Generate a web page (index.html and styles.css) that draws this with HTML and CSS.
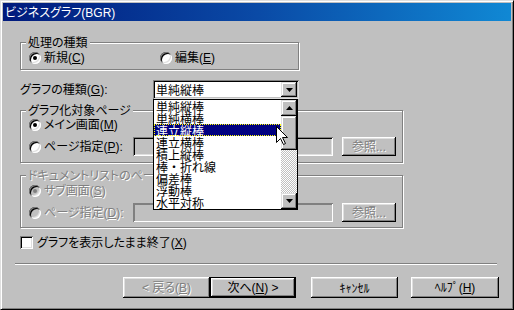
FILE: index.html
```html
<!DOCTYPE html>
<html lang="ja">
<head>
<meta charset="utf-8">
<title>ビジネスグラフ(BGR)</title>
<link rel="stylesheet" href="styles.css">
</head>
<body>
<div class="window">
  <div class="titlebar">ビジネスグラフ<span class="lat">(BGR)</span></div>
  <div class="content">
    <div class="group g1">
      <span class="legend">処理の種類</span>
      <div class="row r13">
        <label class="opt w131"><span class="radio checked"></span><span>新規<span class="lat">(<u>C</u>)</span></span></label>
        <label class="opt"><span class="radio"></span><span>編集<span class="lat">(<u>E</u>)</span></span></label>
      </div>
    </div>

    <div class="combo-row">
      <span class="combo-label">グラフの種類<span class="lat">(<u>G</u>):</span></span>
      <div class="combo">
        <span class="combo-text">単純縦棒</span>
        <span class="combo-btn raised">
          <svg width="7" height="4" viewBox="0 0 7 4"><polygon points="0,0 7,0 3.5,4" fill="#000"/></svg>
        </span>
        <div class="dropdown">
          <ul class="items">
            <li>単純縦棒</li>
            <li>単純横棒</li>
            <li class="sel">連立縦棒</li>
            <li>連立横棒</li>
            <li>積上縦棒</li>
            <li>棒・折れ線</li>
            <li>偏差棒</li>
            <li>浮動棒</li>
            <li>水平対称</li>
          </ul>
          <div class="scrollbar">
            <div class="sb-btn raised">
              <svg width="7" height="4" viewBox="0 0 7 4"><polygon points="3.5,0 7,4 0,4" fill="#000"/></svg>
            </div>
            <div class="sb-thumb raised"></div>
            <div class="sb-track"></div>
            <div class="sb-btn raised">
              <svg width="7" height="4" viewBox="0 0 7 4"><polygon points="0,0 7,0 3.5,4" fill="#000"/></svg>
            </div>
          </div>
          <svg class="cursor" width="13" height="20" viewBox="0 0 13 20">
            <path d="M0.5 0.5 L0.5 16.5 L4.5 12.5 L7.5 18.5 L9.5 17.5 L6.5 11.5 L11.5 11.5 Z" fill="#fff" stroke="#000" stroke-width="1"/>
          </svg>
        </div>
      </div>
    </div>

    <div class="group g2">
      <span class="legend">グラフ化対象ページ</span>
      <div class="row r13">
        <label class="opt"><span class="radio checked"></span><span>メイン画面<span class="lat">(<u>M</u>)</span></span></label>
      </div>
      <div class="row r19 mt6">
        <label class="opt w104"><span class="radio"></span><span>ページ指定<span class="lat">(<u>P</u>):</span></span></label>
        <span class="field"></span>
        <span class="btn small disabled"><span>参照<span class="lat">...</span></span></span>
      </div>
    </div>

    <div class="group g3 dis">
      <span class="legend">ドキュメントリストのページ</span>
      <div class="row r13">
        <label class="opt"><span class="radio checked"></span><span>サブ画面<span class="lat">(<u>S</u>)</span></span></label>
      </div>
      <div class="row r19 mt6">
        <label class="opt w104"><span class="radio"></span><span>ページ指定<span class="lat">(<u>D</u>):</span></span></label>
        <span class="field"></span>
        <span class="btn small disabled"><span>参照<span class="lat">...</span></span></span>
      </div>
    </div>

    <div class="row r13 check-row">
      <label class="opt gap4"><span class="checkbox"></span><span>グラフを表示したまま終了<span class="lat">(<u>X</u>)</span></span></label>
    </div>

    <div class="sep"></div>

    <div class="buttons">
      <span class="btn b-back disabled"><span><span class="lat">&lt; </span>戻る<span class="lat">(<u>B</u>)</span></span></span>
      <span class="btn b-next default"><span>次へ<span class="lat">(<u>N</u>) &gt;</span></span></span>
      <span class="btn b-cancel"><span>ｷｬﾝｾﾙ</span></span>
      <span class="btn b-help"><span>ﾍﾙﾌﾟ<span class="lat">(<u>H</u>)</span></span></span>
    </div>
  </div>
</div>
</body>
</html>
```

FILE: styles.css
```css
* { box-sizing: border-box; }

html, body {
  margin: 0;
  padding: 0;
  background: #c0c0c0;
}

body {
  font-family: "Noto Sans CJK JP", sans-serif;
  font-size: 12px;
  line-height: 12px;
  color: #000;
  font-feature-settings: "palt" 1;
  text-autospace: no-autospace;
}

.lat {
  font-family: "Liberation Sans", sans-serif;
  font-feature-settings: normal;
}

.window {
  position: relative;
  width: 514px;
  height: 310px;
  background: #c0c0c0;
  border: 1px solid;
  border-color: #dfdfdf #000 #000 #dfdfdf;
  box-shadow: inset 1px 1px #fff, inset -1px -1px #808080;
  padding: 2px;
  overflow: hidden;
}

.titlebar {
  height: 18px;
  line-height: 18px;
  padding-left: 2px;
  color: #fff;
  background: linear-gradient(to right, #001a7c 0%, #0a4aa6 50%, #1088d4 100%);
  white-space: nowrap;
}

.content {
  padding-left: 17px;
  display: flex;
  flex-direction: column;
  align-items: flex-start;
}

u { text-decoration: underline; text-underline-offset: 1px; }

/* group boxes */
.group {
  position: relative;
  border: 1px solid #808080;
  box-shadow: inset 1px 1px #fff, 1px 1px #fff;
  padding-left: 8px;
  padding-top: 8px;
}

.legend {
  position: absolute;
  top: -7px;
  left: 5px;
  padding: 0 2px;
  background: #c0c0c0;
  white-space: nowrap;
  line-height: 12px;
}

.g1 { margin-top: 21px; width: 279px; height: 28px; }
.g2 { margin-top: 11px; width: 383px; height: 53px; padding-top: 7px; }
.g3 { margin-top: 12px; width: 383px; height: 53px; }

.row {
  display: flex;
  align-items: center;
  white-space: nowrap;
}
.r13 { height: 13px; }
.r19 { height: 19px; }
.mt6 { margin-top: 6px; }

.opt {
  display: flex;
  align-items: center;
  gap: 3px;
  white-space: nowrap;
}
.gap4 { gap: 4px; }
.w131 { width: 131px; }
.w104 { width: 104px; }

.radio {
  position: relative;
  display: inline-block;
  width: 12px;
  height: 12px;
  border-radius: 50%;
  background: #fff;
  box-shadow: inset 1px 1px #808080, inset -1px -1px #fff, inset 2px 2px #000, inset -2px -2px #dfdfdf;
  flex: none;
}
.radio.checked::after {
  content: "";
  position: absolute;
  left: 4px;
  top: 4px;
  width: 4px;
  height: 4px;
  border-radius: 50%;
  background: #000;
}

.checkbox {
  display: inline-block;
  width: 13px;
  height: 13px;
  background: #fff;
  box-shadow: inset 1px 1px #808080, inset -1px -1px #fff, inset 2px 2px #000, inset -2px -2px #dfdfdf;
  flex: none;
}

.field {
  display: inline-block;
  width: 200px;
  height: 19px;
  background: #c0c0c0;
  box-shadow: inset 1px 1px #808080, inset -1px -1px #fff, inset 2px 2px #000, inset -2px -2px #dfdfdf;
}

/* disabled group */
.dis, .dis .legend { color: #808080; text-shadow: 1px 1px 0 #fff; }
.dis .radio { background: #c0c0c0; }
.dis .radio.checked::after { background: #808080; }
.dis .field { box-shadow: inset 1px 1px #808080, inset -1px -1px #fff, inset 2px 2px #808080, inset -2px -2px #c0c0c0; }

/* raised controls */
.raised {
  background: #c0c0c0;
  box-shadow: inset -1px -1px #000, inset 1px 1px #dfdfdf, inset -2px -2px #808080, inset 2px 2px #fff;
}

.btn {
  display: inline-flex;
  align-items: center;
  justify-content: center;
  height: 21px;
  background: #c0c0c0;
  box-shadow: inset -1px -1px #000, inset 1px 1px #fff, inset -2px -2px #808080, inset 2px 2px #dfdfdf;
  white-space: pre;
}
.btn.small { width: 54px; height: 19px; margin-left: 9px; }
.btn.disabled { color: #808080; text-shadow: 1px 1px 0 #fff; }
.btn.default {
  border: 1px solid #000;
  box-shadow: inset -1px -1px #000, inset 1px 1px #fff, inset -2px -2px #808080, inset 2px 2px #dfdfdf;
}

/* combo */
.combo-row {
  margin-top: 10px;
  display: flex;
  align-items: center;
  height: 19px;
}
.combo-label { width: 133px; white-space: nowrap; }
.combo {
  position: relative;
  width: 146px;
  height: 19px;
  background: #fff;
  box-shadow: inset 1px 1px #808080, inset -1px -1px #dfdfdf, inset 2px 2px #000, inset -2px -2px #c0c0c0;
  display: flex;
  align-items: center;
  justify-content: space-between;
  padding: 2px 2px 2px 3px;
}
.combo-text { line-height: 15px; }
.combo-btn {
  width: 16px;
  height: 15px;
  display: flex;
  align-items: center;
  justify-content: center;
}

.dropdown {
  position: absolute;
  left: 0;
  top: 19px;
  width: 145px;
  height: 111px;
  border: 1px solid #000;
  background: #fff;
  display: flex;
  z-index: 5;
}
.items {
  list-style: none;
  margin: 0;
  padding: 0;
  width: 127px;
}
.items li {
  height: 12px;
  line-height: 12px;
  padding-left: 2px;
  padding-top: 1px;
  white-space: nowrap;
  font-feature-settings: normal;
}
.items li.sel {
  background: #000080;
  color: #fff;
  outline: 1px dotted #ffff00;
  outline-offset: -1px;
}

.scrollbar {
  width: 16px;
  display: flex;
  flex-direction: column;
}
.sb-btn {
  height: 16px;
  display: flex;
  align-items: center;
  justify-content: center;
  flex: none;
}
.sb-thumb { height: 34px; flex: none; }
.sb-track {
  flex: 1;
  background-color: #c0c0c0;
  background-image: repeating-conic-gradient(#ffffff 0 25%, #c0c0c0 0 50%);
  background-size: 2px 2px;
}

.cursor {
  position: absolute;
  left: 122px;
  top: 26px;
  z-index: 6;
}

.check-row { margin-top: 8px; }

.sep {
  margin-top: 14px;
  margin-left: -5px;
  width: 482px;
  height: 2px;
  border-top: 1px solid #808080;
  border-bottom: 1px solid #fff;
}

.buttons {
  margin-top: 12px;
  margin-left: 103px;
  display: flex;
}
.b-back { width: 87px; }
.b-next { width: 86px; }
.b-cancel { width: 87px; margin-left: 15px; }
.b-help { width: 88px; margin-left: 13px; }
```
